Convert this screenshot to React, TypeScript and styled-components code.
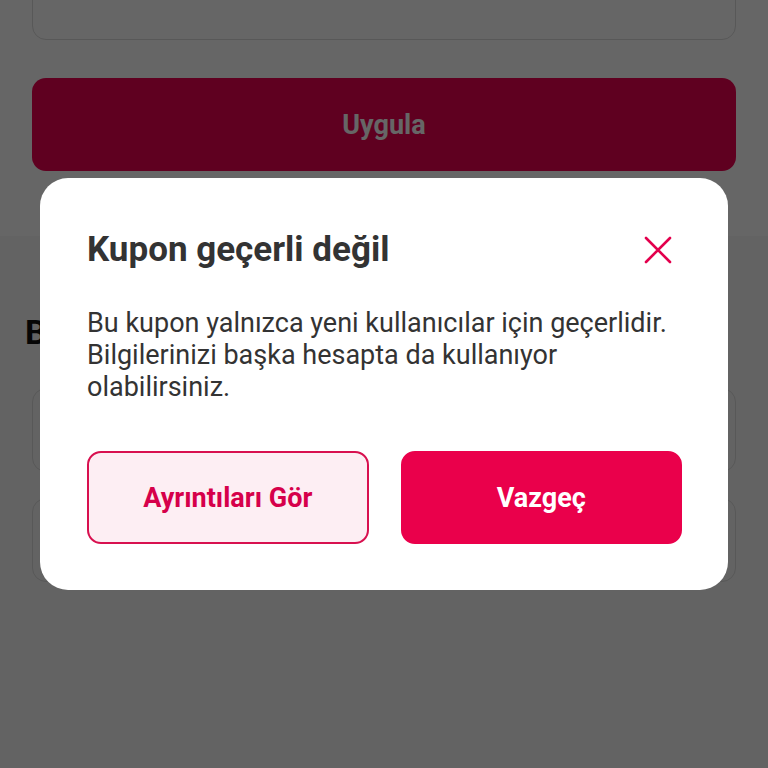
import styled, {createGlobalStyle} from "styled-components";

const GlobalStyle = createGlobalStyle`
    html, body {
        margin: 0;
        padding: 0;
    }
    body {
        font-family: Roboto, "Noto Sans", "Liberation Sans", sans-serif;
        background: #f7f7f7;
    }
    * {
        box-sizing: border-box;
    }
`;

const Screen = styled.div`
    width: 768px;
    height: 768px;
    overflow: hidden;
    position: relative;
    background: #f7f7f7;
`;

// page is scrolled a bit, so the coupon input sits partly above the fold
const ScrollContent = styled.div`
    margin-top: -60px;
`;

const CouponSection = styled.section`
    background: #ffffff;
    padding: 0 32px 65px;
`;

const CouponInput = styled.div`
    height: 100px;
    border: 1px solid #dcdcdc;
    border-radius: 14px;
    background: #ffffff;
`;

const ApplyButton = styled.button`
    display: block;
    width: 100%;
    height: 93px;
    margin-top: 38px;
    border: none;
    border-radius: 14px;
    background: #ee0050;
    color: #ffffff;
    font-family: inherit;
    font-size: 27px;
    font-weight: 700;
`;

const InfoSection = styled.section`
    padding: 76px 32px 40px;
`;

const SectionTitle = styled.h2`
    margin: 0 0 36px -7px;
    font-size: 34px;
    line-height: 40px;
    font-weight: 700;
    color: #111111;
`;

const FieldBox = styled.div<{ $height: number }>`
    height: ${p => p.$height}px;
    border: 1px solid #dcdcdc;
    border-radius: 14px;
    background: #f7f7f7;
    margin-bottom: 26px;
`;

const Overlay = styled.div`
    position: absolute;
    inset: 0;
    background: rgba(0, 0, 0, 0.6);
    display: flex;
    justify-content: center;
    align-items: flex-start;
    padding-top: 178px;
`;

const Dialog = styled.div`
    width: 688px;
    background: #ffffff;
    border-radius: 28px;
    padding: 50px 46px 46px 47px;
`;

const DialogHeader = styled.div`
    display: flex;
    justify-content: space-between;
    align-items: center;
`;

const DialogTitle = styled.h3`
    margin: 0;
    font-size: 35px;
    line-height: 44px;
    font-weight: 700;
    color: #333333;
`;

const CloseButton = styled.button`
    width: 40px;
    height: 40px;
    padding: 0;
    margin-right: 4px;
    border: none;
    background: none;
    display: flex;
    align-items: center;
    justify-content: center;
`;

const DialogText = styled.p`
    margin: 35px 0 0;
    font-size: 27px;
    line-height: 32px;
    color: #333333;
`;

const ButtonRow = styled.div`
    display: grid;
    grid-template-columns: 1fr 1fr;
    gap: 32px;
    margin-top: 48px;
`;

const DialogButton = styled.button<{ $primary?: boolean }>`
    height: 93px;
    border-radius: 14px;
    border: 2px solid ${p => (p.$primary ? "#ea004b" : "#d8104f")};
    background: ${p => (p.$primary ? "#ea004b" : "#fdeef3")};
    color: ${p => (p.$primary ? "#ffffff" : "#d6004a")};
    font-family: inherit;
    font-size: 27px;
    font-weight: 700;
`;

export default function App() {
    return (
        <Screen>
            <GlobalStyle />
            <ScrollContent>
                <CouponSection>
                    <CouponInput />
                    <ApplyButton>Uygula</ApplyButton>
                </CouponSection>
                <InfoSection>
                    <SectionTitle>Bilgilerim</SectionTitle>
                    <FieldBox $height={84} />
                    <FieldBox $height={84} />
                </InfoSection>
            </ScrollContent>
            <Overlay>
                <Dialog>
                    <DialogHeader>
                        <DialogTitle>Kupon geçerli değil</DialogTitle>
                        <CloseButton aria-label="Kapat">
                            <svg width="28" height="28" viewBox="0 0 28 28">
                                <path d="M2 2 L26 26 M26 2 L2 26" stroke="#e3004d" strokeWidth="2.6" strokeLinecap="round" />
                            </svg>
                        </CloseButton>
                    </DialogHeader>
                    <DialogText>
                        Bu kupon yalnızca yeni kullanıcılar için geçerlidir. Bilgilerinizi başka hesapta da kullanıyor olabilirsiniz.
                    </DialogText>
                    <ButtonRow>
                        <DialogButton>Ayrıntıları Gör</DialogButton>
                        <DialogButton $primary>Vazgeç</DialogButton>
                    </ButtonRow>
                </Dialog>
            </Overlay>
        </Screen>
    );
}
